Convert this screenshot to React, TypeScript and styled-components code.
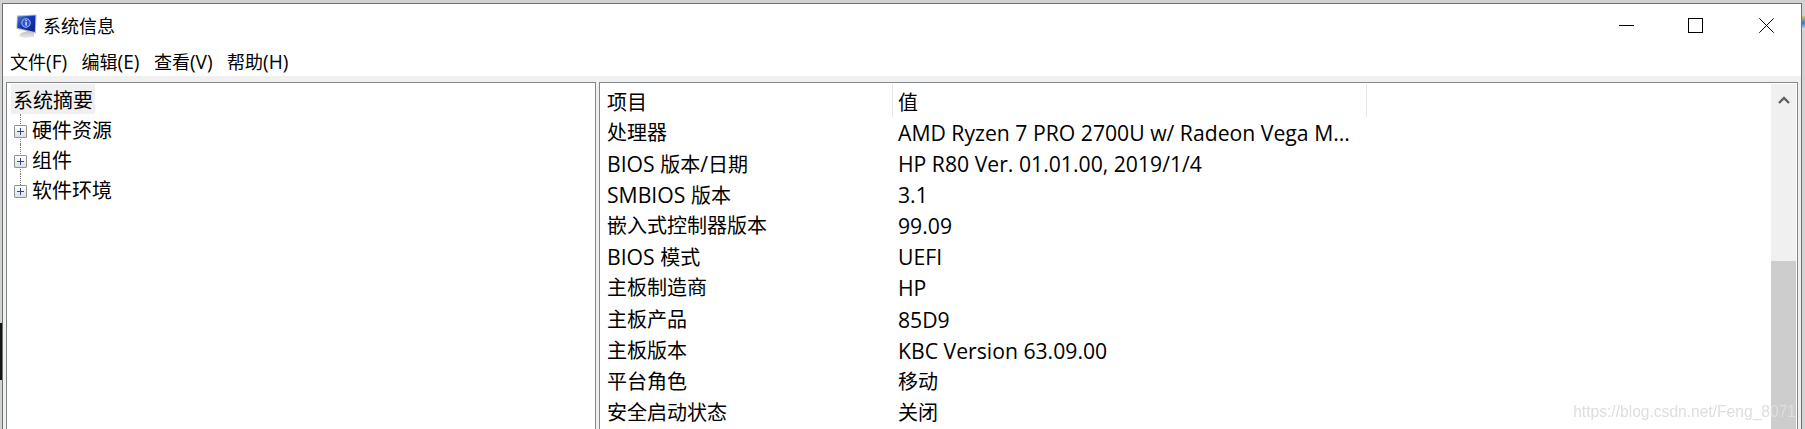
import React from 'react'
import styled, { createGlobalStyle } from 'styled-components'

const GlobalStyle = createGlobalStyle`
  html, body {
    margin: 0;
    padding: 0;
    height: 429px;
    overflow: hidden;
    background: #d2d2d2;
  }
  #root {
    height: 429px;
  }
`

const Desktop = styled.div`
  position: relative;
  height: 429px;
  padding: 3px 3px 0 2px;
  box-sizing: border-box;
  overflow: hidden;
`

// bits of the desktop behind the window that stick out at the edges
const BehindLeft = styled.div`
  position: absolute;
  left: 0;
  top: 323px;
  width: 2px;
  height: 57px;
  background: #141414;
`

const BehindRight = styled.div`
  position: absolute;
  right: 0;
  top: 16px;
  width: 3px;
  height: 14px;
  background: linear-gradient(#e2c26a, #2f7fd0 50%, #e8e8e8);
`

const Window = styled.div`
  height: 426px;
  background: #fff;
  border: 1px solid #6f7072;
  border-bottom: 0;
  box-sizing: border-box;
  display: flex;
  flex-direction: column;
  font-family: "Open Sans", "Noto Sans CJK SC", sans-serif;
  font-size: 18px;
  color: #000;
`

const TitleBar = styled.div`
  height: 43px;
  flex: none;
  display: flex;
  align-items: center;
  padding-left: 11px;
`

const AppIcon = styled.svg`
  width: 24px;
  height: 24px;
  flex: none;
`

const Title = styled.div`
  margin-left: 5px;
  padding-bottom: 2px;
  font-size: 18px;
  flex: 1;
`

const WinButton = styled.div<{ $width: number }>`
  width: ${(p) => p.$width}px;
  height: 43px;
  display: flex;
  align-items: center;
  justify-content: center;
`

const MenuBar = styled.div`
  height: 29px;
  flex: none;
  display: flex;
  align-items: center;
  gap: 14.5px;
  padding-left: 7px;
`

const MenuItem = styled.span`
  font-size: 18px;
`

const Latin = styled.span`
  font-size: 1.06em;
`

const Panes = styled.div`
  flex: 1;
  min-height: 0;
  display: flex;
  gap: 3px;
  background: #f0f0f0;
  padding: 6px 3px 0;
`

const Pane = styled.div<{ $width?: number }>`
  ${(p) => (p.$width ? `width: ${p.$width}px; flex: none;` : 'flex: 1; min-width: 0;')}
  position: relative;
  background: #fff;
  border: 1px solid #82878c;
  border-bottom: 0;
  box-sizing: border-box;
  display: flex;
  overflow: hidden;
`

const Tree = styled.div`
  padding: 1px 0 0 4px;
  font-size: 20px;
`

const TreeRoot = styled.div`
  background: #f0f0f0;
  height: 30px;
  line-height: 33px;
  padding: 0 2px;
  width: max-content;
`

const TreeRow = styled.div`
  position: relative;
  height: 30px;
  line-height: 33px;
  padding-left: 21px;
  white-space: nowrap;
`

const Expander = styled.span`
  position: absolute;
  left: 3px;
  top: 11px;
  width: 11px;
  height: 11px;
  border: 1px solid #919191;
  border-radius: 1px;
  background: linear-gradient(#fff, #dedede);
  &::before {
    content: '';
    position: absolute;
    left: 2px;
    right: 2px;
    top: 5px;
    height: 1px;
    background: #2b4a86;
  }
  &::after {
    content: '';
    position: absolute;
    top: 2px;
    bottom: 2px;
    left: 5px;
    width: 1px;
    background: #2b4a86;
  }
`

const TreeLine = styled.span<{ $last: boolean }>`
  position: absolute;
  left: 9px;
  top: 0;
  height: ${(p) => (p.$last ? 11 : 30)}px;
  border-left: 1px dotted #777;
`

const TableArea = styled.div`
  flex: 1;
  min-width: 0;
  font-size: 20px;
`

const Row = styled.div`
  display: grid;
  grid-template-columns: 293px 474px;
  height: 31.1px;
  line-height: 31px;
  white-space: nowrap;
`

const HeadRow = styled(Row)`
  height: 34px;
`

const Cell = styled.div<{ $value?: boolean }>`
  padding-left: ${(p) => (p.$value ? 5 : 7)}px;
  overflow: hidden;
`

const HeadCell = styled(Cell)`
  position: relative;
  padding-top: 4px;
  &::after {
    content: '';
    position: absolute;
    right: 0;
    top: 1px;
    width: 1px;
    height: 33px;
    background: #e5e5e5;
  }
`

const Scrollbar = styled.div`
  width: 25px;
  flex: none;
  background: #f0f0f0;
  margin: 1px 1px 0 0;
  display: flex;
  flex-direction: column;
`

const ScrollUp = styled.div`
  height: 30px;
  display: flex;
  align-items: center;
  justify-content: center;
`

const ScrollSpace = styled.div`
  height: 147px;
`

const ScrollThumb = styled.div`
  flex: 1;
  background: #cdcdcd;
`

const Watermark = styled.div`
  position: absolute;
  right: 1px;
  bottom: 8px;
  font-family: "Liberation Sans", sans-serif;
  font-size: 15.6px;
  color: #dedede;
  filter: blur(0.3px);
  white-space: nowrap;
`

const rows: [string, string][] = [
  ['处理器', 'AMD Ryzen 7 PRO 2700U w/ Radeon Vega M...'],
  ['BIOS 版本/日期', 'HP R80 Ver. 01.01.00, 2019/1/4'],
  ['SMBIOS 版本', '3.1'],
  ['嵌入式控制器版本', '99.09'],
  ['BIOS 模式', 'UEFI'],
  ['主板制造商', 'HP'],
  ['主板产品', '85D9'],
  ['主板版本', 'KBC Version 63.09.00'],
  ['平台角色', '移动'],
  ['安全启动状态', '关闭'],
]

const treeItems = ['硬件资源', '组件', '软件环境']
const menus = ['文件(F)', '编辑(E)', '查看(V)', '帮助(H)']

// latin runs come out a little narrow next to the CJK glyphs, so they get their own size
function Mixed({ text }: { text: string }) {
  const parts = text.split(/([\x20-\x7e]+)/).filter(Boolean)
  return (
    <>
      {parts.map((part, i) =>
        /[\x20-\x7e]/.test(part) ? <Latin key={i}>{part}</Latin> : <span key={i}>{part}</span>
      )}
    </>
  )
}

export default function App() {
  return (
    <Desktop>
      <GlobalStyle />
      <BehindLeft />
      <BehindRight />
      <Window>
        <TitleBar>
          <AppIcon viewBox="0 0 24 24">
            <defs>
              <linearGradient id="screen" x1="0" y1="0" x2="1" y2="1">
                <stop offset="0" stopColor="#4f78dc" />
                <stop offset="0.45" stopColor="#1636b4" />
                <stop offset="1" stopColor="#0b2488" />
              </linearGradient>
              <linearGradient id="stand" x1="0" y1="0" x2="0" y2="1">
                <stop offset="0" stopColor="#b9bcc0" />
                <stop offset="1" stopColor="#eceded" />
              </linearGradient>
            </defs>
            <path d="M7 19 L14 17 L20 19 L20 23 L11 24 L5 22 Z" fill="url(#stand)" />
            <path d="M3 1.5 L22.5 0.5 L21.8 19.5 L2.4 14.8 Z" fill="#b4bac4" />
            <path d="M3.8 2.6 L21.4 1.6 L20.8 18 L3.2 13.8 Z" fill="url(#screen)" />
            <circle cx="12" cy="9" r="4.2" fill="#2a55cc" stroke="#a9c6f2" strokeWidth="1" />
            <rect x="11.4" y="8" width="1.3" height="3.6" fill="#e6efff" />
            <rect x="11.4" y="6.1" width="1.3" height="1.2" fill="#e6efff" />
          </AppIcon>
          <Title>系统信息</Title>
          <WinButton $width={67}>
            <svg width="15" height="15" viewBox="0 0 15 15">
              <path d="M0 7.5 H15" stroke="#000" strokeWidth="1" />
            </svg>
          </WinButton>
          <WinButton $width={71}>
            <svg width="15" height="15" viewBox="0 0 15 15">
              <rect x="0.5" y="0.5" width="14" height="14" fill="none" stroke="#000" strokeWidth="1" />
            </svg>
          </WinButton>
          <WinButton $width={70}>
            <svg width="15" height="15" viewBox="0 0 15 15">
              <path d="M0.3 0.3 L14.7 14.7 M14.7 0.3 L0.3 14.7" stroke="#000" strokeWidth="1" />
            </svg>
          </WinButton>
        </TitleBar>
        <MenuBar>
          {menus.map((menu) => (
            <MenuItem key={menu}>
              <Mixed text={menu} />
            </MenuItem>
          ))}
        </MenuBar>
        <Panes>
          <Pane $width={590}>
            <Tree>
              <TreeRoot>系统摘要</TreeRoot>
              {treeItems.map((item, i) => (
                <TreeRow key={item}>
                  <TreeLine $last={i === treeItems.length - 1} />
                  <Expander />
                  {item}
                </TreeRow>
              ))}
            </Tree>
          </Pane>
          <Pane>
            <TableArea>
              <HeadRow>
                <HeadCell>项目</HeadCell>
                <HeadCell $value>值</HeadCell>
              </HeadRow>
              {rows.map(([name, value]) => (
                <Row key={name}>
                  <Cell>
                    <Mixed text={name} />
                  </Cell>
                  <Cell $value>
                    <Mixed text={value} />
                  </Cell>
                </Row>
              ))}
            </TableArea>
            <Scrollbar>
              <ScrollUp>
                <svg width="12" height="9" viewBox="0 0 12 9">
                  <path d="M1 8 L6 3 L11 8" fill="none" stroke="#606060" strokeWidth="2.4" />
                </svg>
              </ScrollUp>
              <ScrollSpace />
              <ScrollThumb />
            </Scrollbar>
            <Watermark>https://blog.csdn.net/Feng_8071</Watermark>
          </Pane>
        </Panes>
      </Window>
    </Desktop>
  )
}
